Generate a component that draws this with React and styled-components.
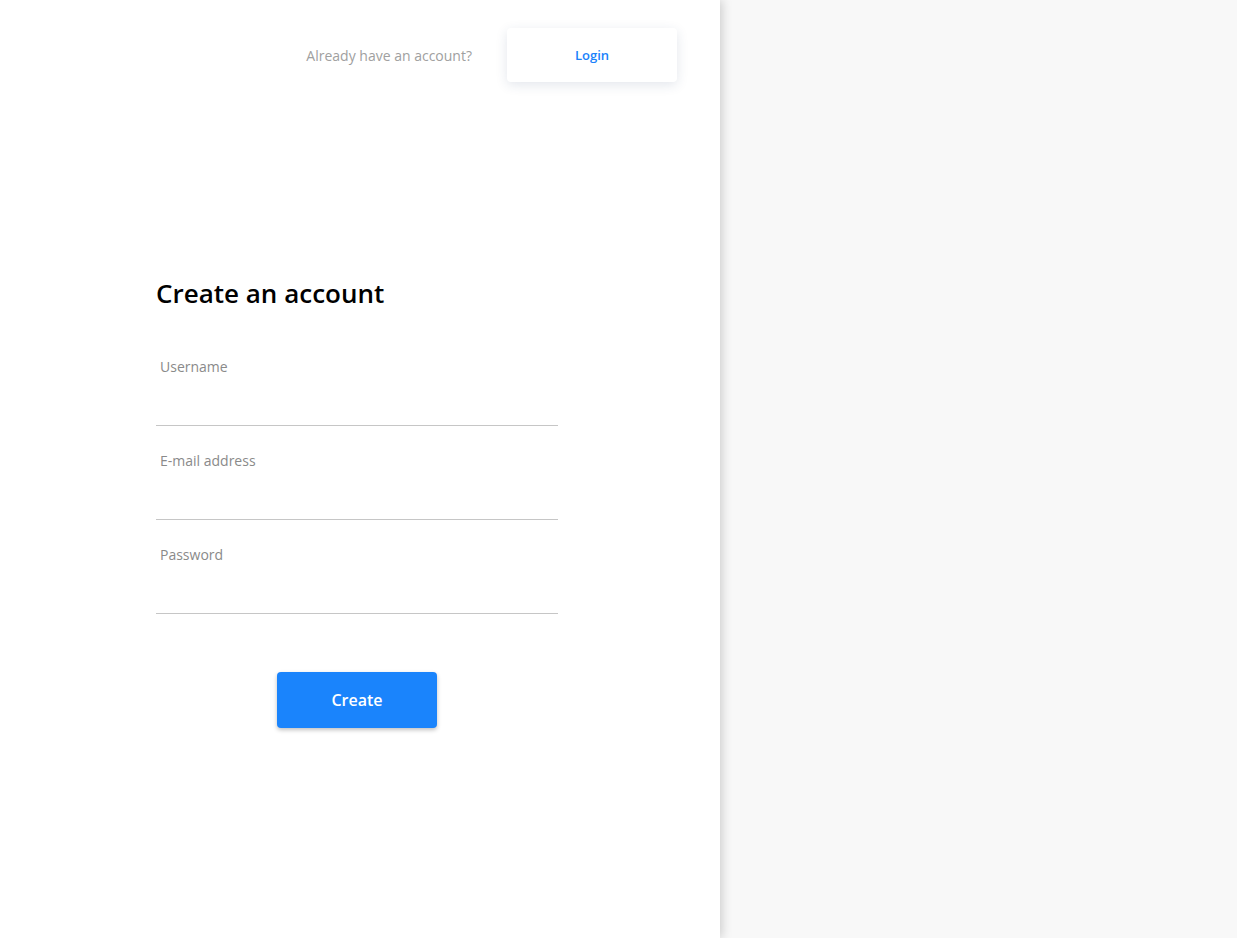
import React from "react";
import styled, { createGlobalStyle } from "styled-components";

const GlobalStyle = createGlobalStyle`
  html, body {
    margin: 0;
    padding: 0;
    height: 100%;
  }
  body {
    font-family: "Open Sans", "Liberation Sans", sans-serif;
    background-color: #f8f8f8;
  }
`;

const Page = styled.div`
  display: flex;
  height: 100vh;
  background-color: #f8f8f8;
`;

const Panel = styled.div`
  display: flex;
  flex-direction: column;
  width: 720px;
  height: 100%;
  background-color: #ffffff;
  box-shadow: 2px 0 10px 0 rgba(0, 0, 0, 0.18);
  z-index: 1;
`;

const TopBar = styled.div`
  display: flex;
  align-items: center;
  justify-content: flex-end;
  gap: 35px;
  padding: 28px 43px 0px 0px;
`;

const TopText = styled.span`
  font-size: 14px;
  color: #a0a0a0;
`;

const LoginButton = styled.button`
  width: 170px;
  height: 54px;
  border: none;
  border-radius: 4px;
  background-color: #ffffff;
  color: #1a82fb;
  font-family: "Open Sans", "Liberation Sans", sans-serif;
  font-size: 13px;
  font-weight: 600;
  box-shadow: 0 3px 12px 0 rgba(40, 60, 110, 0.13);
  cursor: pointer;
`;

const Form = styled.form`
  display: flex;
  flex-direction: column;
  width: 402px;
  margin: 193px 0px 0px 156px;
`;

const Title = styled.h1`
  margin: 0px 0px 46px 0px;
  font-size: 26px;
  font-weight: 600;
  line-height: 36px;
  color: #000000;
`;

const Field = styled.label`
  display: flex;
  flex-direction: column;
  margin-bottom: ${(p) => (p.$last ? "58px" : "25px")};
`;

const FieldLabel = styled.span`
  padding-left: 4px;
  font-size: 14px;
  line-height: 20px;
  color: #8a8a8a;
`;

const Input = styled.input`
  height: 48px;
  padding: 0px 4px;
  border: none;
  border-bottom: 1px solid #c6c6c6;
  outline: none;
  background: transparent;
  font-family: "Open Sans", "Liberation Sans", sans-serif;
  font-size: 15px;
  color: #222;
`;

const CreateButton = styled.button`
  align-self: center;
  width: 160px;
  height: 56px;
  border: none;
  border-radius: 4px;
  background-color: #1a84fc;
  color: #ffffff;
  font-family: "Open Sans", "Liberation Sans", sans-serif;
  font-size: 16px;
  font-weight: 600;
  box-shadow: 0 2px 4px 0 rgba(0, 0, 0, 0.25);
  cursor: pointer;
`;

const fields = [
  { label: "Username", type: "text" },
  { label: "E-mail address", type: "email" },
  { label: "Password", type: "password" },
];

export default function App() {
  return (
    <>
      <GlobalStyle />
      <Page>
        <Panel>
          <TopBar>
            <TopText>Already have an account?</TopText>
            <LoginButton type="button">Login</LoginButton>
          </TopBar>
          <Form onSubmit={(e) => e.preventDefault()}>
            <Title>Create an account</Title>
            {fields.map((f, i) => (
              <Field key={f.label} $last={i === fields.length - 1}>
                <FieldLabel>{f.label}</FieldLabel>
                <Input type={f.type} />
              </Field>
            ))}
            <CreateButton type="submit">Create</CreateButton>
          </Form>
        </Panel>
      </Page>
    </>
  );
}
